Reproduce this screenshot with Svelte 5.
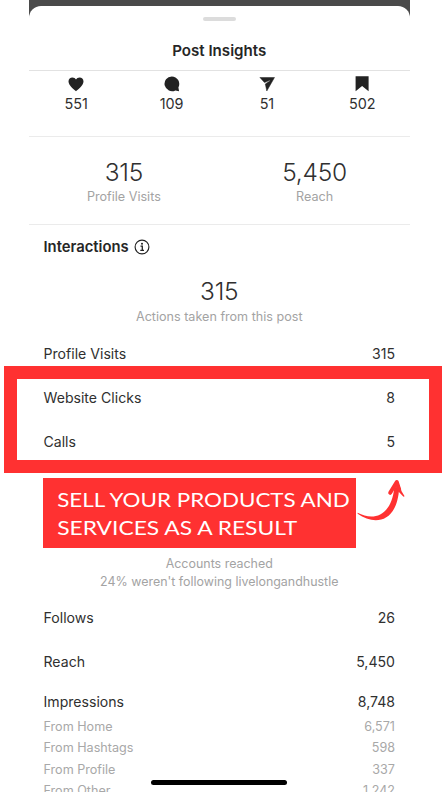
<script>
  const reactions = [
    { icon: 'heart', count: '551' },
    { icon: 'comment', count: '109' },
    { icon: 'share', count: '51' },
    { icon: 'save', count: '502' }
  ];
  const summary = [
    { value: '315', label: 'Profile Visits' },
    { value: '5,450', label: 'Reach' }
  ];
  const actions = [
    ['Profile Visits', '315'],
    ['Website Clicks', '8'],
    ['Calls', '5']
  ];
  const discovery = [
    ['Follows', '26'],
    ['Reach', '5,450']
  ];
  const sources = [
    ['From Home', '6,571'],
    ['From Hashtags', '598'],
    ['From Profile', '337'],
    ['From Other', '1,242']
  ];
</script>

<main class="page">
  <div class="phone">
    <div class="sheet">
      <div class="handle"></div>
      <h1>Post Insights</h1>

      <section class="reactions">
        {#each reactions as r}
          <div class="reaction">
            <svg width="16" height="16" viewBox="0 0 16 16" fill="#222">
              {#if r.icon === 'heart'}
                <path d="M8 15.2C7.3 14.4 .5 9.7 .5 5.4C.5 3 2.3 1.4 4.4 1.4C6 1.4 7.3 2.2 8 3.4C8.7 2.2 10 1.4 11.6 1.4C13.7 1.4 15.5 3 15.5 5.4C15.5 9.7 8.7 14.4 8 15.2Z" />
              {:else if r.icon === 'comment'}
                <path d="M7.8 .4A7.5 7.4 0 1 0 11.4 14.4L15.1 15.2L14.4 11.4A7.5 7.5 0 0 0 7.8 .4Z" />
              {:else if r.icon === 'share'}
                <path d="M.9 1.5H15.5L7.8 15L6.3 8L11.2 4.8L10.9 4.3L5.5 6.6Z" stroke="#222" stroke-width=".5" stroke-linejoin="round" />
              {:else}
                <path d="M1.6 .3H14.6V15.2L8.1 10L1.6 15.2Z" />
              {/if}
            </svg>
            <span>{r.count}</span>
          </div>
        {/each}
      </section>

      <section class="summary">
        {#each summary as s}
          <div class="metric">
            <strong>{s.value}</strong>
            <span>{s.label}</span>
          </div>
        {/each}
      </section>

      <section class="details">
        <h2>
          Interactions
          <svg width="16" height="16" viewBox="0 0 16 16" fill="none" stroke="#222">
            <circle cx="8" cy="8" r="6.9" stroke-width="1.15" />
            <circle cx="8" cy="4.8" r="1" fill="#222" stroke="none" />
            <path d="M6.5 7.2H8.3V11.3M6.3 11.4H10" stroke-width="1.3" />
          </svg>
        </h2>
        <div class="metric total">
          <strong>315</strong>
          <span>Actions taken from this post</span>
        </div>
        {#each actions as [label, value]}
          <div class="row"><span>{label}</span><span>{value}</span></div>
        {/each}
        <p class="accounts">Accounts reached<br />24% weren't following livelongandhustle</p>
        {#each discovery as [label, value]}
          <div class="row"><span>{label}</span><span>{value}</span></div>
        {/each}
        <div class="row impressions"><span>Impressions</span><span>8,748</span></div>
        {#each sources as [label, value]}
          <div class="row source"><span>{label}</span><span>{value}</span></div>
        {/each}
      </section>
    </div>
  </div>

  <div class="frame"></div>
  <div class="banner">
    <div class="message">SELL YOUR PRODUCTS AND</div>
    <div class="message second">SERVICES AS A RESULT</div>
  </div>
  <svg class="arrow" width="50" height="46" viewBox="0 0 50 46" fill="#ff3131">
    <path d="M.6 34.8C17 43.5 34.5 38 37.4 9L42.2 9.5C40.5 44 18.5 48.5 .6 35.8Z" />
    <path d="M33.2 14.8L39.8 4L42.2 11.5" fill="none" stroke="#ff3131" stroke-width="4" stroke-linejoin="round" stroke-linecap="round" />
    <path d="M40.5 2.5L44.6 13.2L47.6 18.2L46.5 18.8L39 11Z" />
  </svg>
  <div class="home"></div>
</main>

<style>
  :global(body) { margin: 0; background: #fff; }
  .page {
    position: relative;
    width: 443px;
    height: 800px;
    overflow: hidden;
    background: #fff;
    font-family: Inter, "Liberation Sans", sans-serif;
    color: #303030;
  }
  .phone {
    box-sizing: border-box;
    width: 381.5px;
    height: 792px;
    margin-left: 28.5px;
    padding-top: 6px;
    overflow: hidden;
    background: linear-gradient(#4a4a4a 0 18px, #fff 18px);
  }
  .sheet {
    display: flex;
    flex-direction: column;
    height: 900px;
    background: #fff;
    border-radius: 12px 12px 0 0;
  }
  .handle {
    flex: none;
    width: 33px;
    height: 4px;
    margin: 11px auto 0;
    border-radius: 2px;
    background: #dcdcdc;
  }
  h1 {
    margin: 0;
    padding-top: 19px;
    height: 30px;
    line-height: 21px;
    font-size: 15.1px;
    font-weight: 600;
    text-align: center;
    color: #262626;
    border-bottom: 1.5px solid #e2e2e2;
  }
  .reactions {
    display: grid;
    grid-template-columns: repeat(4, 1fr);
    height: 64.5px;
    border-bottom: 1px solid #ebebeb;
  }
  .reaction {
    display: flex;
    flex-direction: column;
    align-items: center;
    padding-top: 4.5px;
    font-size: 14.4px;
    line-height: 24px;
  }
  .reaction svg { flex: none; }
  .summary {
    display: grid;
    grid-template-columns: 1fr 1fr;
    height: 87px;
    border-bottom: 1px solid #ebebeb;
  }
  .metric {
    display: flex;
    flex-direction: column;
    align-items: center;
    padding-top: 19px;
  }
  .metric strong { font-size: 24.5px; line-height: 32px; font-weight: 300; letter-spacing: -.2px; }
  .metric span { font-size: 12.6px; line-height: 17px; color: #a3a3a3; }
  .details { padding: 0 15px; }
  h2 {
    display: flex;
    align-items: center;
    gap: 5px;
    height: 44px;
    margin: 0;
    font-size: 14.8px;
    font-weight: 600;
    color: #262626;
  }
  .total { height: 57px; padding-top: 6px; }
  .total span { line-height: 20px; }
  .row {
    display: flex;
    justify-content: space-between;
    font-size: 14.1px;
    line-height: 44px;
  }
  .accounts {
    margin: 91px 0 5.6px;
    font-size: 12.45px;
    line-height: 18px;
    text-align: center;
    color: #a3a3a3;
  }
  .impressions { line-height: 37px; margin: -1px 0 -4px; }
  .source { font-size: 12.6px; line-height: 21.2px; color: #a8a8a8; }
  .frame {
    position: absolute;
    left: 4px;
    top: 366px;
    box-sizing: border-box;
    width: 438px;
    height: 106.5px;
    border: 13.5px solid #ff3131;
  }
  .banner {
    position: absolute;
    left: 43px;
    top: 478.3px;
    width: 298px;
    height: 62px;
    padding: 8px 0 0 14.5px;
    white-space: nowrap;
    color: #fff;
    background: #ff3131;
    font: 400 19px/28px Lato, sans-serif;
  }
  .message { transform: translateX(-.8px) scaleX(1.178); transform-origin: left; }
  .second { transform: translateX(-.8px) scaleX(1.2); }
  .arrow { position: absolute; left: 357px; top: 478px; }
  .home {
    position: absolute;
    left: 151px;
    top: 780px;
    width: 136px;
    height: 5px;
    border-radius: 3px;
    background: #000;
  }
</style>
